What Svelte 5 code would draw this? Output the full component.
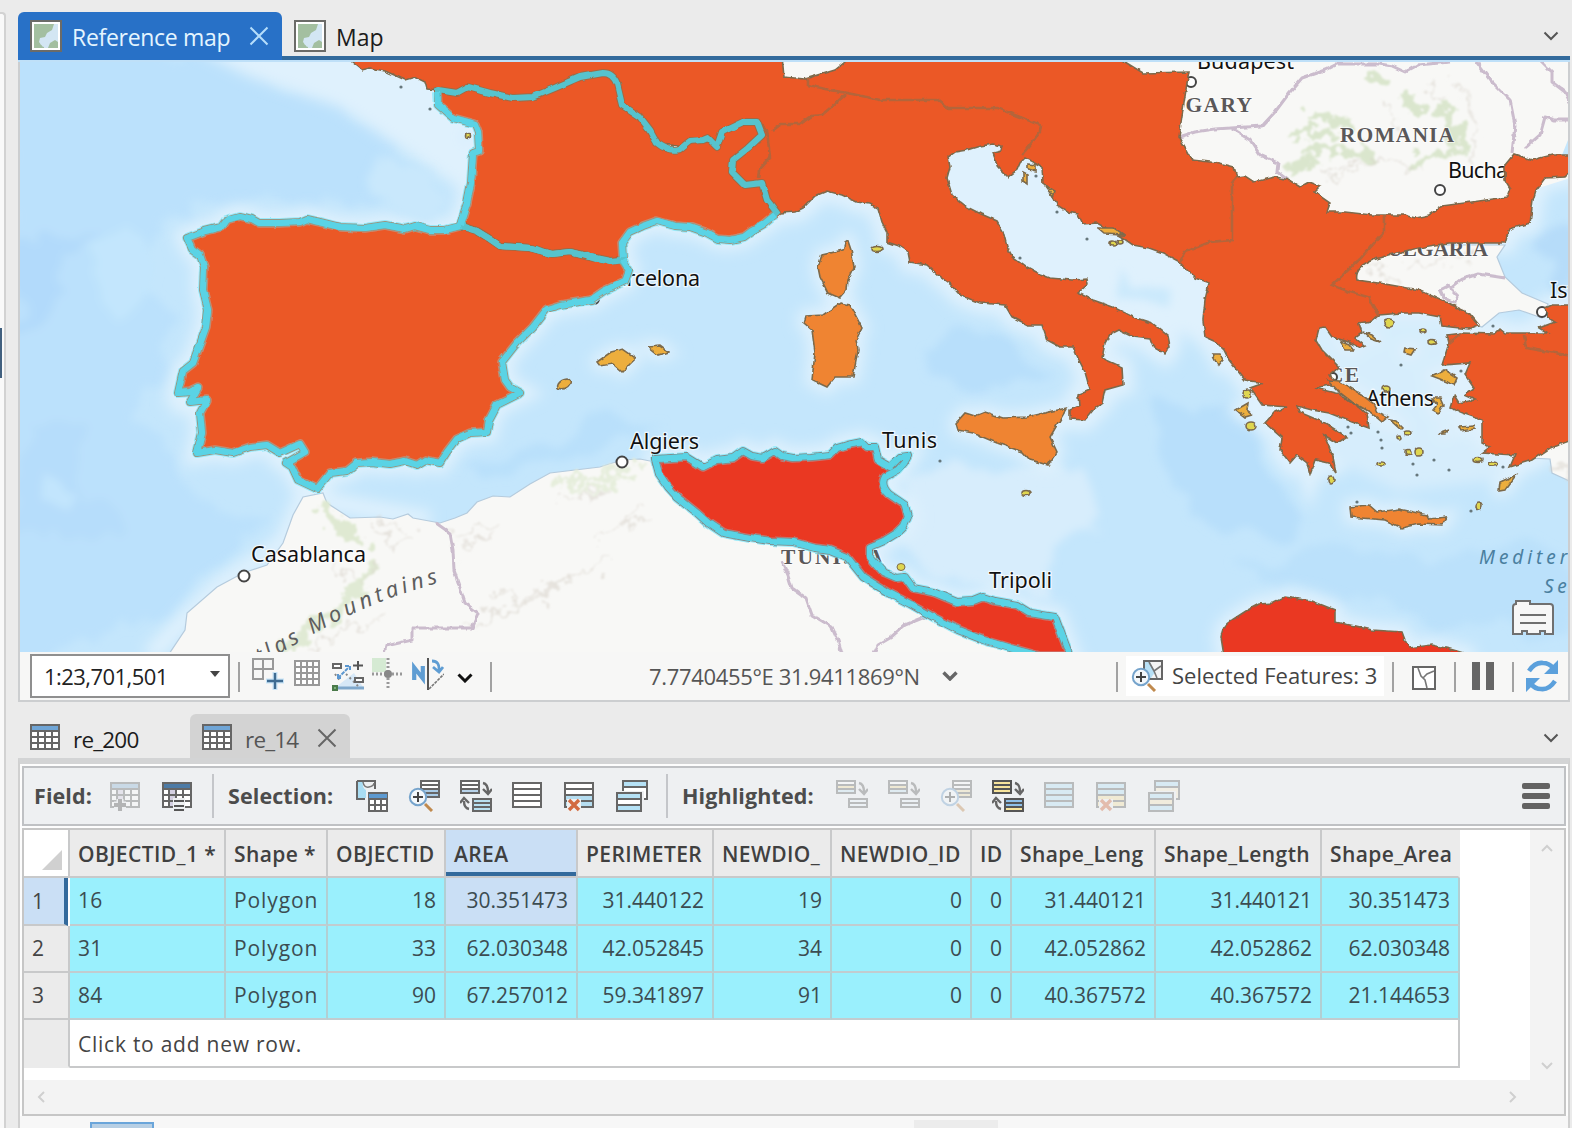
<script>
  const france =
    'M438 90L457 93L468 87L490 93L513 98L533 97L557 87L580 77L603 73Q613 73 617 84L622 105L640 117L650 130L657 143Q668 152 680 149L690 141L703 140L708 138L717 147L722 132L743 122L757 122L762 135L748 148L733 160L732 172L745 185L762 183L767 200L777 213L764 224L752 231L744 237L730 240L718 239L707 233L690 227L675 226L657 221L643 226L630 232L622 243L623 260L610 262L590 257L570 252L552 254L530 248L500 246L490 239L477 231L460 225L467 203L471 183L473 153L479 151L478 132L475 124L453 118L438 105Z';
  const iberia =
    'M187 238L205 231L221 227L226 220L240 216L252 219L259 223L280 223L300 222L307 219L320 222L340 227L365 228L385 225L405 229L415 226L430 230L445 230L460 226L477 231L490 239L500 246L530 248L552 254L570 252L590 257L610 261L622 260L629 270L625 281L604 291L591 300L560 305L547 309L533 327L517 343L502 362L505 380L510 387L521 393L497 405L489 420L487 432L470 433L457 439L447 452L440 463L425 460L417 465L405 461L390 464L372 462L357 463L347 471L330 473L317 489L298 480L292 467L286 463L305 452L300 444L280 453L267 445L250 447L233 453L215 450L197 453L202 433L200 413L207 400L190 402L198 388L190 392L178 393L183 371L193 363L200 344L206 327L208 310L203 290L204 267L200 255L192 249Z';
  const iberiaCoast =
    'M623 260L629 270L625 281L604 291L591 300L560 305L547 309L533 327L517 343L502 362L505 380L510 387L521 393L497 405L489 420L487 432L470 433L457 439L447 452L440 463L425 460L417 465L405 461L390 464L372 462L357 463L347 471L330 473L317 489L298 480L292 467L286 463L305 452L300 444L280 453L267 445L250 447L233 453L215 450L197 453L202 433L200 413L207 400L190 402L198 388L190 392L178 393L183 371L193 363L200 344L206 327L208 310L203 290L204 267L200 255L192 249L187 238L205 231L221 227L226 220L240 216L252 219L259 223L280 223L300 222L307 219L320 222L340 227L365 228L385 225L405 229L415 226L430 230L445 230L460 226';
  const franceCoast =
    'M437 92L438 105L453 118L475 124L478 132L479 151L473 153L471 183L467 203L460 225M775 215L764 224L752 231L744 237L730 240L718 239L707 233L690 227L675 226L657 221L643 226L630 232L622 243L623 258';
  const mainland =
    'M345 56L352 62L362 70L370 68L385 71L392 74L405 80L415 77L425 82L427 89L438 90L450 100L540 105L600 100L640 140L700 150L735 195L765 210L780 213L795 212L803 208L815 196L827 191L842 195L857 202L870 204L878 208L882 222L887 232L887 242L899 246L908 252L910 262L927 265L940 277L950 284L960 295L980 303L1005 305L1012 317L1028 325L1042 325L1047 340L1060 347L1073 347L1079 360L1085 372L1090 390L1078 395L1079 406L1070 410L1070 419L1085 420L1094 409L1102 403L1105 390L1123 385L1122 367L1102 358L1105 343L1110 334L1118 330L1133 337L1150 339L1153 347L1165 354L1170 346L1168 336L1152 323L1133 317L1113 307L1093 300L1078 293L1088 284L1087 279L1072 280L1050 278L1040 274L1027 267L1012 256L1007 247L1003 231L997 221L981 214L967 207L952 195L947 178L950 167L948 157L955 152L967 150L980 146L993 144L1002 146L1001 151L993 153L998 167L1008 177L1017 170L1020 163L1025 158L1042 167L1043 183L1050 190L1057 205L1068 212L1078 214L1083 224L1097 223L1113 232L1123 238L1133 245L1149 248L1163 253L1178 261L1188 271L1195 278L1209 283L1205 300L1203 320L1205 337L1216 342L1224 350L1229 360L1245 380L1264 383L1250 388L1262 405L1287 407L1275 412L1265 423L1282 438L1280 450L1290 463L1297 455L1307 463L1310 474L1315 460L1329 463L1336 473L1333 457L1324 435L1337 443L1347 437L1325 423L1299 412L1297 406L1312 410L1329 413L1352 422L1369 428L1367 414L1359 407L1347 400L1339 394L1315 388L1339 383L1329 376L1339 367L1322 350L1316 340L1319 328L1325 327L1332 337L1349 342L1360 348L1365 346L1355 338L1362 333L1359 323L1372 321L1379 315L1402 313L1419 313L1440 317L1442 326L1469 329L1479 325L1469 313L1452 305L1419 290L1385 284L1357 280Q1354 267 1372 260Q1410 248 1449 243L1505 243L1508 232L1512 228L1530 223L1533 200L1536 190L1545 178L1565 177L1572 170L1572 155L1552 155L1532 160L1514 154L1505 165L1505 180L1510 188L1507 197L1472 202L1442 206L1429 215L1415 218L1405 215L1372 215L1345 212L1327 212L1330 203L1314 192L1320 186L1309 182L1300 187L1289 180L1275 177L1254 182L1245 176L1237 177L1234 167L1219 163L1192 160L1185 147L1179 137L1184 103L1187 83L1189 72L1143 73L1125 62L1115 56L850 56L845 62L835 70L805 79L784 77L782 56Z';
  const turkey =
    'M1572 305L1552 305L1545 308L1547 317L1555 322L1539 328L1547 333L1505 333L1500 329L1495 334L1462 333L1447 335L1449 343L1442 365L1470 363L1465 375L1474 388L1464 395L1475 400L1459 403L1454 395L1450 408L1462 413L1482 420L1482 443L1490 447L1482 453L1515 455L1510 467L1532 460L1550 448L1572 440Z';
  const tunisia =
    'M655 459L687 457L695 462L703 467L717 460L733 458L743 451L752 456L763 458L775 451L782 456L793 458L812 457L830 455L837 448L847 445L862 442L867 447L875 447L878 460L890 467L900 457L908 456L904 463L898 470L885 477Q880 485 889 494L905 505L908 517L904 526L897 533L884 541L870 547L870 557L883 572L897 578L905 577L913 588L933 592L945 597L957 602L973 601L983 597L995 601L1017 605L1030 613L1055 617L1060 630L1070 656L1040 656L1010 648L983 640L958 630L933 617L910 604L887 592L863 577L855 567L847 557L830 550L815 548L793 542L770 541L750 538L723 533L708 523L697 513L677 497L668 487L659 474Z';
  const libya =
    'M1224 656L1221 637Q1222 626 1232 620L1246 611L1259 604L1273 603L1285 597L1312 601L1335 610L1335 622L1355 626L1372 630L1402 632L1405 640L1409 648L1432 645L1450 649L1474 656Z';
  const bigIslands = [
    'M848 241L851 250L854 267L848 280L847 290L840 298L828 293L820 277L818 267L822 255L843 250L845 243Z',
    'M840 303L850 305L858 320L862 328L856 340L858 350L853 377L835 377L827 387L812 380L815 353L812 330L804 323L806 316L823 315Z',
    'M956 423L965 413L975 416L985 412L1003 418L1027 417L1067 408L1050 437L1057 452L1048 465L1030 460L1023 452L997 443L973 433L958 430Z',
    'M1350 507L1369 505L1377 512L1399 509L1427 515L1429 519L1447 517L1442 525L1419 524L1402 528L1385 520L1351 517Z',
    'M1328 380L1339 381L1362 395L1374 404L1378 412L1388 417L1382 422L1370 412L1352 402L1339 392Z',
  ];
  const midIslands = [
    'M597 362L611 352L623 349L636 358L622 372L613 364L600 366Z',
    'M648 347L660 346L668 352L658 355Z',
    'M1516 475L1505 490L1499 491L1500 482Z',
    'M1432 376L1445 370L1457 378L1454 385L1440 379Z',
    'M1432 398L1440 398L1443 405L1438 413L1433 410L1437 405Z',
    'M1212 354L1220 354L1223 360L1218 366Z',
    'M1236 410L1248 403L1247 411L1252 415L1245 417Z',
    'M1097 228L1113 228L1123 235L1104 234Z',
    'M1028 164L1036 165L1036 171L1028 169ZM1023 172L1027 174L1027 184L1023 181ZM1045 186L1055 192L1053 197Z',
    'M1390 420L1396 421L1403 428L1401 430ZM1405 348L1415 349L1411 355L1404 353ZM1340 341L1350 345L1354 350L1346 350ZM1363 332L1372 335L1380 342L1371 339Z',
    'M1459 427L1474 426L1475 429L1461 431ZM1438 434L1449 430L1445 434Z',
  ];
  // [cx, cy, rx, ry]
  const specks = [
    [1389, 323, 5, 4], [1247, 394, 4, 4], [1251, 426, 5, 4], [1419, 452, 4, 4], [1331, 480, 3, 4],
    [1026, 493, 4, 2.5], [1479, 506, 3, 4], [1408, 452, 3, 2.5], [1381, 464, 4, 2],
    [1423, 331, 3, 2], [1432, 342, 4, 2.5], [1386, 389, 4, 3], [1478, 460, 5, 2.5], [1493, 464, 4, 2],
    [877, 249, 5, 2.5], [1408, 433, 3, 2], [468, 136, 2.5, 2.5], [1399, 438, 2, 2],
    [1113, 243, 3, 2], [1120, 242, 3, 2],
  ];
  const dots = [
    [940, 461], [1401, 365], [1493, 326], [1378, 432], [1381, 440], [1382, 448], [1413, 464], [1417, 475],
    [1434, 460], [1449, 470], [1471, 511], [1357, 502], [1503, 467], [1087, 239], [1036, 176], [1057, 212],
    [401, 87], [430, 109], [1020, 258], [1348, 427], [1351, 433], [1461, 371],
  ];
  const borders =
    'M1179 137L1195 132L1215 129L1262 126L1275 112L1290 92L1302 78L1325 70L1345 60M1232 129L1250 140L1260 155L1278 163L1277 172L1288 180M1475 60L1490 80L1510 100L1515 125L1512 153M1540 60L1552 72L1552 82L1565 92L1570 102M1570 120L1555 120L1545 117L1540 135L1525 148M1335 64L1380 64L1392 66L1405 72L1418 65L1450 62M1505 278L1492 276L1478 274L1460 280L1450 288L1458 296L1455 303L1444 298L1440 290L1450 285M436 523L450 533L453 550L454 570L460 588L465 603L478 613L472 628L412 628L412 640L386 646L384 654M782 562L788 575L792 588L806 598L812 615L832 627L838 640L842 654M925 617L905 625L890 638L878 645L874 654';
  const admin =
    'M808 78L808 85L825 89L847 93L862 96L880 100L938 100L948 108L997 108L1025 119L1041 125L1040 132L1022 155M780 124L800 124L812 116L822 115L845 95M780 125L772 131M757 120L767 130L770 158L759 170L758 178M1237 177L1232 183L1232 240L1210 242L1185 252L1180 262M1384 215L1384 232L1360 259L1332 285L1350 292L1368 297L1378 315M1524 335L1526 348L1572 356M1449 343L1462 333';

  const columns = [
    { name: 'OBJECTID_1 *', w: 156, left: true },
    { name: 'Shape *', w: 102, left: true },
    { name: 'OBJECTID', w: 118 },
    { name: 'AREA', w: 132, active: true },
    { name: 'PERIMETER', w: 136 },
    { name: 'NEWDIO_', w: 118 },
    { name: 'NEWDIO_ID', w: 140 },
    { name: 'ID', w: 40 },
    { name: 'Shape_Leng', w: 144 },
    { name: 'Shape_Length', w: 166 },
    { name: 'Shape_Area', w: 138 },
  ];
  const rows = [
    ['16', 'Polygon', '18', '30.351473', '31.440122', '19', '0', '0', '31.440121', '31.440121', '30.351473'],
    ['31', 'Polygon', '33', '62.030348', '42.052845', '34', '0', '0', '42.052862', '42.052862', '62.030348'],
    ['84', 'Polygon', '90', '67.257012', '59.341897', '91', '0', '0', '40.367572', '40.367572', '21.144653'],
  ];
  const selectionTools = ['byAttr', 'zoomSel', 'switch', 'clear', 'delete', 'copy'];
  const highlightTools = [
    ['move', true], ['move', true], ['zoomHi', true], ['switchHi', false], ['selectHi', true], ['deleteHi', true], ['copyHi', true],
  ];
</script>

{#snippet mapIcon()}
  <svg class="i32" viewBox="0 0 32 32">
    <rect x="1" y="1" width="30" height="30" fill="#fff" stroke="#6b6b68" stroke-width="2" />
    <rect x="4" y="4" width="24" height="24" fill="#d3e6f3" />
    <path d="M4 4H24L22 10L17 13L15 17L10 18L12 22L10 24L14 26V28H4Z" fill="#a3bfa0" />
    <path d="M10 18H13V21L16 22V26L13 27L9 22Z" fill="#d3e6f3" />
    <path d="M18 28L20 23L25 20L28 22V28Z" fill="#a3bfa0" />
  </svg>
{/snippet}

{#snippet chevron(cls)}
  <svg class="chev {cls}" viewBox="0 0 16 10"><path d="M1.5 1.5L8 8L14.5 1.5" /></svg>
{/snippet}

{#snippet closeIcon(cls)}
  <svg class="close {cls}" viewBox="0 0 20 20"><path d="M1.5 1.5L18.5 18.5M18.5 1.5L1.5 18.5" /></svg>
{/snippet}

{#snippet tableIcon()}
  <svg class="tbl" viewBox="0 0 30 26">
    <rect x="1" y="1" width="28" height="24" fill="#fff" stroke="#666" stroke-width="2" />
    <rect x="2" y="2" width="26" height="4" fill="#6fa5d6" />
    <path d="M0 7H30M0 13H30M0 19H30M8 7V26M15 7V26M22 7V26" stroke="#666" stroke-width="2" />
  </svg>
{/snippet}

{#snippet stack(x, y, w, a, b, c, s)}
  <rect {x} {y} width={w} height="12" fill={a} />
  <rect {x} y={y + 4} width={w} height="4" fill={b} />
  <rect {x} y={y + 8} width={w} height="4" fill={c} />
  <path d="M{x} {y + 4}H{x + w}M{x} {y + 8}H{x + w}" stroke={s} stroke-width="2" />
  <rect {x} {y} width={w} height="12" fill="none" stroke={s} stroke-width="2" />
{/snippet}

{#snippet magnifier()}
  <circle cx="10" cy="17" r="8.2" fill="#f4f8fb" stroke="#76a4cc" stroke-width="2" />
  <path d="M10 12V22M5 17H15" stroke="#444" stroke-width="2" />
  <path d="M17 24L24 31" stroke="#c08a4e" stroke-width="3" />
{/snippet}

{#snippet tool(name, dim)}
  <svg class="i32" class:dim viewBox="0 0 32 32">
    {#if name === 'addField' || name === 'calcField'}
      <rect x="2" y="3" width="28" height="24" fill="#fff" stroke="#666" stroke-width="2" />
      <rect x="3" y="4" width="26" height="5" fill={name === 'addField' ? '#8fb4d4' : '#4d7ba6'} />
      <rect x="8" y="10" width="7" height="16" fill="#d4d0e2" />
      <path d="M1 9H31M1 15H31M1 21H31M8 9V27M15 9V27M22 9V27" stroke="#666" stroke-width="2" />
      {#if name === 'addField'}
        <path d="M11 19V31M5 25H17" stroke="#edeff1" stroke-width="7" /><path d="M11 19V31M5 25H17" stroke="#555" stroke-width="4" />
      {:else}
        <rect x="12" y="18" width="12" height="14" fill="#edeff1" /><path d="M13 21H23M13 26H23M13 30H23" stroke="#555" stroke-width="2" />
      {/if}
    {:else if name === 'byAttr'}
      <path d="M1 1H19V9M1 1V19H9" fill="none" stroke="#666" stroke-width="2" />
      <path d="M2 2H7Q6 8 10 10V18H2Z" fill="#a9ddf3" /><path d="M7 2Q8 8 13 7T18 3" fill="none" stroke="#777" stroke-width="1.5" />
      <rect x="13" y="13" width="18" height="18" fill="#fff" stroke="#666" stroke-width="2" />
      <rect x="13" y="13" width="18" height="5" fill="#5d9ad1" />
      <path d="M12 19H32M12 25H32M19 19V31M25 19V31M12 13H32" stroke="#666" stroke-width="2" />
    {:else if name === 'zoomSel' || name === 'zoomHi'}
      <rect x="13" y="1" width="18" height="16" fill="#fff" stroke="#666" stroke-width="2" />
      <rect x="14" y="10" width="16" height="6" fill={name === 'zoomHi' ? '#f0dfae' : '#a9cbe6'} />
      <path d="M13 5H31M13 9H31M13 13H31" stroke="#666" stroke-width="2" />
      {@render magnifier()}
    {:else if name === 'switch'}
      {@render stack(1, 1, 18, '#fff', '#fff', '#b8d3ea', '#666')}
      {@render stack(13, 19, 18, '#b8e0f0', '#b8e0f0', '#b8e0f0', '#666')}
      <path class="ar" d="M23 3Q28 4 28 12M23 9L28 14L32 9M9 29Q4 28 4 21M0 23L4 18L9 23" />
    {:else if name === 'switchHi'}
      {@render stack(1, 1, 18, '#f7e49c', '#f7e49c', '#f7e49c', '#555')}
      {@render stack(13, 19, 18, '#8fc0e8', '#8fc0e8', '#f7e49c', '#555')}
      <path class="ar" d="M23 3Q28 4 28 12M23 9L28 14L32 9M9 29Q4 28 4 21M0 23L4 18L9 23" />
    {:else if name === 'move'}
      {@render stack(1, 1, 18, '#fff', '#f3dfa4', '#c9e4f1', '#666')}
      <rect x="13" y="19" width="18" height="8" fill="#eaf4fa" stroke="#666" stroke-width="2" /><path d="M13 23H31" stroke="#666" stroke-width="2" />
      <path class="ar" d="M23 3Q28 4 28 12M23 9L28 14L32 9" />
    {:else if name === 'clear' || name === 'selectHi'}
      <rect x="1" y="3" width="28" height="24" fill={name === 'clear' ? '#fff' : '#b5e1f5'} stroke="#666" stroke-width="2" />
      <path d="M1 9H29M1 15H29M1 21H29" stroke="#666" stroke-width="2" />
    {:else if name === 'delete' || name === 'deleteHi'}
      <rect x="1" y="3" width="28" height="24" fill={name === 'delete' ? '#fff' : '#b5e1f5'} stroke="#666" stroke-width="2" />
      <rect x="2" y="16" width="26" height="10" fill={name === 'delete' ? '#b5ddf0' : '#f5e2a4'} />
      <path d="M1 9H29M1 15H29M1 21H29" stroke="#666" stroke-width="2" />
      <rect x="3" y="19" width="14" height="13" fill="#f0f0f0" />
      <path d="M5 20L15 30M15 20L5 30" stroke="#d26a40" stroke-width="3.4" />
    {:else}
      <rect x="7" y="1" width="24" height="18" fill={name === 'copy' ? '#fff' : '#f8ebcf'} stroke="#666" stroke-width="2" />
      <rect x="8" y="2" width="22" height="4" fill="#b5e1f5" /><path d="M7 7H31" stroke="#666" stroke-width="2" />
      <rect x="0" y="11" width="28" height="21" fill="#eef0f2" />
      <rect x="1" y="13" width="24" height="18" fill="#b5e1f5" stroke="#666" stroke-width="2" />
      <rect x="2" y="19" width="22" height="6" fill={name === 'copy' ? '#fff' : '#f8e7bd'} />
      <path d="M1 19H25M1 25H25" stroke="#666" stroke-width="2" />
    {/if}
  </svg>
{/snippet}

<div class="app">
  <div class="edge"><div class="panel"><div class="mark"></div></div></div>
  <main>
    <header class="tabs">
      <div class="tab on">{@render mapIcon()}<span class="t1">Reference map</span>{@render closeIcon('light')}</div>
      <div class="tab plain">{@render mapIcon()}<span class="t2">Map</span></div>
      {@render chevron('end')}
    </header>

    <section class="view">
      <svg class="map" viewBox="20 62 1548 590">
        <defs>
          <filter id="soft" x="-20%" y="-20%" width="140%" height="140%"><feGaussianBlur stdDeviation="7" /></filter>
          <filter id="soft2" x="-20%" y="-20%" width="140%" height="140%">
            <feTurbulence type="fractalNoise" baseFrequency="0.02" numOctaves="3" seed="4" />
            <feDisplacementMap in="SourceGraphic" scale="50" xChannelSelector="R" yChannelSelector="G" />
            <feGaussianBlur stdDeviation="4" />
          </filter>
          <filter id="rough" x="-2%" y="-2%" width="104%" height="104%">
            <feTurbulence type="fractalNoise" baseFrequency="0.14" numOctaves="2" seed="7" />
            <feDisplacementMap in="SourceGraphic" scale="4" xChannelSelector="R" yChannelSelector="G" />
            <feGaussianBlur stdDeviation="0.35" />
          </filter>
          <filter id="glow" x="-2%" y="-2%" width="104%" height="104%">
            <feTurbulence type="fractalNoise" baseFrequency="0.1" numOctaves="1" seed="3" />
            <feDisplacementMap in="SourceGraphic" scale="4" xChannelSelector="R" yChannelSelector="G" />
            <feGaussianBlur stdDeviation="0.6" />
          </filter>
          <filter id="relief" x="-5%" y="-5%" width="110%" height="110%">
            <feTurbulence type="fractalNoise" baseFrequency="0.07" numOctaves="4" seed="11" />
            <feDisplacementMap in="SourceGraphic" scale="34" xChannelSelector="R" yChannelSelector="G" />
            <feGaussianBlur stdDeviation="1" />
          </filter>
          <path id="fr" d={france} />
          <path id="ib" d={iberia} />
          <path id="eu" d={mainland} />
          <path id="tk" d={turkey} />
          <path id="tn" d={tunisia} />
          <path id="ly" d={libya} />
          <path id="atlas" d="M243 672C300 648 350 598 480 574" />
        </defs>

        <rect x="0" y="40" width="1600" height="640" fill="#c4e6fc" />
        <g filter="url(#soft2)">
          <path d="M0 40H150L260 75L340 100L395 150L440 190L380 205L190 200L140 260L170 320L140 420L200 500L260 520L230 560L150 620L0 680Z" fill="#bbe1fc" />
          <path d="M0 240H60L85 228L120 225L60 250L70 300L20 340Z" fill="#b2dafb" />
          <path d="M20 430L75 440L100 500L120 525L80 545L20 540Z" fill="#b6ddfb" />
          <path d="M85 240L140 230L160 290L110 320Z" fill="#c3e6fd" />
          <path d="M40 460L90 485L80 510L40 500Z" fill="#c2e5fd" />
          <path d="M950 325L990 325L1050 370L1030 385L930 375L920 360Z" fill="#b8dffb" />
          <path d="M440 480L560 440L600 415L660 420L600 450L500 475Z" fill="#b9e0fb" />
          <path d="M1150 400L1220 410L1290 490L1300 530L1230 540L1170 480Z" fill="#b8dffb" />
          <path d="M1240 560L1350 545L1430 560L1540 540L1590 590L1568 640L1430 620L1300 590Z" fill="#bbe1fb" />
          <path d="M910 470L1030 460L1080 480L1100 520L1050 560L1050 600L960 590L900 540Z" fill="#d7edfc" />
          <path d="M1545 230H1580V290H1555Z" fill="#b6dcf9" />
        </g>
        <g filter="url(#soft)" fill="#dff1fd" stroke="#dff1fd" stroke-width="22">
          <use href="#ib" /><use href="#fr" /><use href="#eu" /><use href="#tk" /><use href="#tn" /><use href="#ly" stroke-width="16" />
          <path d="M950 150L1030 160L1180 270L1200 330L1160 310L1050 270L960 190Z" />
          <path d="M1320 330H1440V430L1490 470L1400 480L1340 450Z" fill="#d6edfc" stroke="#d6edfc" />
          <path d="M200 50H440L480 210L465 190L400 145L340 105L250 75Z" stroke-width="4" />
          {#each bigIslands as d}<path {d} stroke-width="14" />{/each}
          {#each midIslands as d}<path {d} stroke-width="12" />{/each}
          <path d="M150 656L185 620L217 587L283 543L303 497L430 520" fill="none" stroke-width="18" />
        </g>
        <g filter="url(#soft2)">
          <path d="M385 155L430 168L450 205L400 212L370 190Z" fill="#c9e8fc" />
          <path d="M1125 270L1160 290L1165 305L1130 300Z" fill="#cbe9fc" />
        </g>

        <g fill="#f8f8f6" stroke="#b5cbdd" stroke-width="1.2">
          <path d="M165 660L185 630L187 613L217 587L243 573L267 565L283 543L293 515L303 497L323 493L327 503L350 518L380 517L393 519L408 514L413 518L440 523L455 518L467 513L477 502L493 496L510 497L530 484L550 473L575 470L600 467L622 460L640 459L670 465L850 530L880 565L960 610L1062 645L1062 660Z" />
          <path d="M1110 50H1580V175L1500 200L1400 225L1170 200ZM780 50H850L830 90H780Z" stroke="none" />
          <path d="M1350 245H1505L1497 257L1505 277L1522 293L1548 304L1542 318L1519 310L1499 313L1482 327L1400 300L1350 290Z" />
          <path d="M1580 430L1530 458L1550 459L1552 473L1580 486Z" />
        </g>
        <path d="M1572 130L1562 155H1572Z" fill="#c4e6fc" />

        <g filter="url(#relief)" fill="none" stroke-linecap="round">
          <path d="M322 510L340 525L362 540" stroke="#dfe9d2" stroke-width="13" />
          <path d="M350 595L372 570M285 650L320 622L345 605" stroke="#e0ead4" stroke-width="12" />
          <path d="M560 485L600 478L640 470M575 492L620 482" stroke="#e6eedc" stroke-width="6" />
          <path d="M1310 120L1330 115L1345 125M1300 135L1330 130M1310 150L1340 150L1375 158M1405 95L1420 118M1440 105L1455 130L1460 150L1430 158L1410 165M1290 172L1310 160M1370 75L1390 82" stroke="#dae6cd" stroke-width="9" />
          <path d="M375 530L390 545L410 535M385 522L400 530M490 590L520 600L580 575M470 625L520 605L610 560M500 615L540 600M640 505L620 530M350 630L385 612M330 560L350 580M365 580L378 566M310 650L350 625M455 540L500 520M460 550L490 535M560 500L610 490M600 540L650 515M1320 170L1370 160L1420 168M1330 176L1365 168M1465 90L1480 130L1470 165M1455 80L1472 120M1380 100L1400 130M1430 85L1450 100M1365 270L1400 282M1410 262L1470 258M1555 465L1570 475" stroke="#d9d3cc" stroke-width="2.5" opacity=".6" />
        </g>

        <path d={borders} fill="none" stroke="#cbbccd" stroke-width="3" stroke-linejoin="round" filter="url(#rough)" />

        <g class="nations">
          <text x="1134" y="112" textLength="118">HUNGARY</text>
          <text x="1340" y="142" textLength="114">ROMANIA</text>
          <text x="1373" y="256" textLength="115">BULGARIA</text>
          <text x="781" y="564" textLength="102">TUNISIA</text>
          <text x="1262" y="382" textLength="97">GREECE</text>
        </g>
        <text class="atlas"><textPath href="#atlas" startOffset="2">Atlas Mountains</textPath></text>
        <g class="sea">
          <text x="1479" y="564" textLength="172">Mediterranean</text>
          <text x="1544" y="593" textLength="37">Sea</text>
        </g>
        <g class="towns">
          <circle cx="1191" cy="82" r="5" /><circle cx="1440" cy="190" r="5" /><circle cx="1542" cy="312" r="5" />
          <circle cx="622" cy="462" r="5.5" /><circle cx="244" cy="576" r="5.5" /><circle cx="594" cy="299" r="5" />
          <circle cx="982" cy="600" r="5" /><circle cx="1333" cy="377" r="4" />
        </g>
        <g class="cities">
          <text x="1197" y="69" textLength="97">Budapest</text>
          <text x="1448" y="178" textLength="96">Bucharest</text>
          <text x="1550" y="298">Istanbul</text>
          <text x="601" y="286" textLength="99">Barcelona</text>
          <text x="630" y="449" textLength="69">Algiers</text>
          <text x="882" y="448" textLength="55">Tunis</text>
          <text x="251" y="562" textLength="115">Casablanca</text>
          <text x="989" y="588" textLength="63">Tripoli</text>
          <text x="1366" y="406" textLength="68">Athens</text>
        </g>

        <g filter="url(#rough)" stroke="#7c6a4c" stroke-width="1.6">
          <g fill="#eb5828"><use href="#eu" /><use href="#tk" /></g>
          <path d={admin} fill="none" stroke="#b3653a" stroke-width="2.6" />
          <use href="#ly" fill="#ea3723" />
          <g fill="#ef8432">{#each bigIslands as d}<path {d} />{/each}</g>
          <g fill="#edae3c">
            {#each midIslands as d}<path {d} />{/each}
            <ellipse cx="564" cy="384" rx="7" ry="4" transform="rotate(-30 564 384)" />
          </g>
          <g fill="#dfd650">{#each specks as [cx, cy, rx, ry]}<ellipse {cx} {cy} {rx} {ry} />{/each}</g>
        </g>
        <g fill="#66777c">{#each dots as [cx, cy]}<circle {cx} {cy} r="1.6" />{/each}</g>

        <g filter="url(#glow)" stroke-linejoin="round">
          <g fill="none" stroke="#8eeafa" stroke-width="10" opacity=".8">
            <path d={iberiaCoast} /><path d={franceCoast} /><use href="#tn" />
          </g>
          <g fill="#eb5828" stroke="#a06a44" stroke-width="8"><use href="#fr" /><use href="#ib" /></g>
          <use href="#tn" fill="#ea3723" stroke="#7d5a50" stroke-width="8" />
          <g fill="none" stroke="#8eeafa" stroke-width="9.5" opacity=".35"><path d={iberiaCoast} /><path d={franceCoast} /><use href="#tn" /></g>
          <g fill="none" stroke="#57c3cd" stroke-width="6"><use href="#fr" /><use href="#ib" /><use href="#tn" /></g>
          <g fill="none" stroke="#5ad3e5" stroke-width="6"><path d={iberiaCoast} /><path d={franceCoast} /><use href="#tn" /></g>
        </g>
        <ellipse cx="901" cy="567" rx="4" ry="3.5" fill="#dfd650" stroke="#7c6a4c" />

        <g fill="#f7f7f7" stroke="#707070" stroke-width="2">
          <path d="M1513 633V607Q1513 604 1516 604V601H1530V604H1550Q1553 604 1553 607V634H1545V631H1540V634H1527V631H1522V634H1513Z" />
          <path d="M1520 615H1546M1520 623H1546" />
        </g>
      </svg>

      <footer class="status">
        <div class="scale"><span>1:23,701,501</span><i></i></div>
        <b class="sep s1"></b>
        <svg class="i32 a" viewBox="0 0 32 32">
          <g fill="none" stroke="#999" stroke-width="2"><path d="M1 1H21V11H1ZM1 11V21H11V1" /></g>
          <path d="M23 14V32M14 23H32" stroke="#c7e3f6" stroke-width="5" /><path d="M23 15V31M15 23H31" stroke="#3f6c92" stroke-width="2.4" />
        </svg>
        <svg class="g26" viewBox="0 0 26 26"><path d="M1 1H25V25H1ZM1 7H25M1 13H25M1 19H25M7 1V25M13 1V25M19 1V25" fill="#fff" stroke="#999" stroke-width="2" /></svg>
        <svg class="i32 c" viewBox="0 0 32 32">
          <path d="M4 27L22 13L31 27Z" fill="#d6e8f7" /><path d="M2 28H32" stroke="#7fa8cc" stroke-width="3" />
          <path d="M14 14L26 26M3 14L9 22" stroke="#888" stroke-width="2" stroke-dasharray="2 3" />
          <path d="M6 18L17 7M17 6H12M18 6V11M5 18H10M6 18V13" stroke="#5b97d0" stroke-width="2" stroke-dasharray="4 1" fill="none" />
          <path d="M26 1V10M21 5.5H31" stroke="#555" stroke-width="2" />
          <g fill="#fff" stroke="#666" stroke-width="2"><rect x="1" y="4" width="8" height="4" /><rect x="23" y="18" width="8" height="4" /><rect x="1" y="26" width="4" height="4" fill="#7bb27a" stroke="#4a7a4a" /></g>
        </svg>
        <svg class="i32 d" viewBox="0 0 32 32">
          <rect width="14" height="14" fill="#d5ead3" /><path d="M16 0V32M0 16H32" stroke="#999" stroke-width="3" stroke-dasharray="2 2" /><circle cx="16" cy="16" r="4" fill="#888" />
        </svg>
        <svg class="i32 e" viewBox="0 0 32 32">
          <path d="M2.2 22V9.5L10.8 20.5V8" fill="none" stroke="#5f9dd3" stroke-width="4.2" />
          <path d="M16 0V32" stroke="#555" stroke-width="2" /><path d="M17 31L32 16" stroke="#777" stroke-width="1.6" stroke-dasharray="3 1" />
          <path d="M20 3Q28 3 27 13M21 9L27 14L31 9" fill="none" stroke="#5f9dd3" stroke-width="2.8" />
        </svg>
        {@render chevron('dark')}
        <b class="sep s2"></b>
        <span class="coords">7.7740455°E 31.9411869°N</span>
        {@render chevron('mid')}
        <b class="sep s3"></b>
        <div class="sel">
          <svg class="i32" viewBox="0 0 32 32">
            <rect x="13" y="1" width="18" height="18" fill="#f4f4f4" stroke="#666" stroke-width="2" />
            <path d="M14 2H19L24 12L20 18H14Z" fill="#b8e0f5" /><path d="M18 2L23 11L30 6M23 11L26 18" fill="none" stroke="#777" stroke-width="1.6" />
            {@render magnifier()}
          </svg>
          <span>Selected Features: 3</span>
        </div>
        <b class="sep s4"></b>
        <svg class="m24" viewBox="0 0 24 24"><rect x="1" y="1" width="22" height="22" fill="#fff" stroke="#666" stroke-width="2" /><path d="M6 2L9 10L13 14L15 22M11 12L15 8L22 5" fill="none" stroke="#777" stroke-width="1.6" /></svg>
        <b class="sep s5"></b>
        <div class="pause"></div>
        <b class="sep s6"></b>
        <svg class="i32 r" viewBox="0 0 32 32">
          <path d="M3 11Q9 2 17 3Q23 3 27 8M29 21Q23 30 15 29Q9 29 5 24" fill="none" stroke="#5ba0dc" stroke-width="4.6" />
          <path d="M32 0V14H18ZM0 32V18H14Z" fill="#5ba0dc" />
        </svg>
      </footer>
    </section>

    <nav class="ttabs">
      <div class="tt">{@render tableIcon()}<span>re_200</span></div>
      <div class="tt on">{@render tableIcon()}<span>re_14</span>{@render closeIcon('gray')}</div>
      {@render chevron('end')}
    </nav>

    <section class="pane">
      <div class="toolbar">
        <strong class="w1">Field:</strong>
        <div class="group f">{@render tool('addField', true)}{@render tool('calcField', false)}</div>
        <b class="bar b1"></b>
        <strong class="w2">Selection:</strong>
        <div class="group">{#each selectionTools as t}{@render tool(t, false)}{/each}</div>
        <b class="bar b2"></b>
        <strong class="w3">Highlighted:</strong>
        <div class="group">{#each highlightTools as [t, d]}{@render tool(t, d)}{/each}</div>
        <div class="burger"><i></i><i></i><i></i></div>
      </div>

      <div class="grid">
        <div class="body">
          <div class="tr head">
            <div class="rh corner"><svg viewBox="0 0 20 20"><path d="M20 0V20H0Z" fill="#d0d0d0" /></svg></div>
            {#each columns as c}<div class="th" class:active={c.active} style:width="{c.w}px">{c.name}</div>{/each}
          </div>
          {#each rows as r, i}
            <div class="tr row r{i + 1}">
              <div class="rh" class:cur={i === 0}>{i + 1}</div>
              {#each r as v, j}
                <div class="td" class:left={columns[j].left} class:word={j === 1} class:cell={i === 0 && j === 3} style:width="{columns[j].w}px">{v}</div>
              {/each}
            </div>
          {/each}
          <div class="tr add"><div class="rh"></div><div class="new">Click to add new row.</div></div>
          <div class="hs">
            <svg viewBox="0 0 8 12"><path d="M7 1L2 6L7 11" /></svg>
            <svg viewBox="0 0 8 12"><path d="M1 1L6 6L1 11" /></svg>
          </div>
        </div>
        <div class="vs">
          <svg viewBox="0 0 12 8"><path d="M1 7L6 2L11 7" /></svg>
          <svg viewBox="0 0 12 8"><path d="M1 1L6 6L11 1" /></svg>
        </div>
      </div>
      <div class="under"><i class="u1"></i><i class="u2"></i></div>
    </section>
  </main>
</div>

<style>
  :global(body) { margin: 0; background: #ebebeb; overflow: hidden; }
  .app { width: 1572px; height: 1128px; display: flex; overflow: hidden; background: #ebebeb; font-family: 'Open Sans', 'Noto Sans', sans-serif; font-size: 21px; color: #444; line-height: 1; }
  svg { display: block; flex: none; }
  .app :global(*) { box-sizing: border-box; }
  .edge { width: 18px; padding-top: 12px; }
  .panel { width: 6px; height: 1116px; background: #f9f9f9; border-right: 2px solid #d2d2d2; border-top: 2px solid #d2d2d2; border-top-right-radius: 4px; padding-top: 314px; }
  .mark { width: 2px; height: 50px; background: #41607f; }
  main { width: 1552px; display: flex; flex-direction: column; }
  .i32 { width: 32px; height: 32px; }
  .dim { opacity: .38; }
  .ar { fill: none; stroke: #666; stroke-width: 2.4; }

  .tabs { height: 62px; display: flex; align-items: flex-end; background: linear-gradient(#ebebeb 56px, #336a9c 56px, #336a9c 60px, #bfe0f8 60px); }
  .tab { display: flex; align-items: center; height: 48px; margin-bottom: 2px; }
  .tab.on { width: 264px; background: #2871c7; border-radius: 6px 6px 0 0; color: #e4f5ff; padding-left: 12px; }
  .tab.plain { padding-left: 12px; color: #1c1c1c; flex: 1; }
  .t1 { font-size: 23px; letter-spacing: -.3px; width: 158px; margin-left: 10px; white-space: nowrap; }
  .t2 { font-size: 23px; margin-left: 10px; }
  .t1, .t2 { padding-top: 2px; }
  .close { width: 20px; height: 20px; fill: none; stroke-width: 2; }
  .close.light { stroke: #b5ddfb; margin-left: 19px; }
  .close.gray { stroke: #666; margin: 3px 0 0 19px; }
  .chev { width: 16px; height: 10px; fill: none; stroke: #555; stroke-width: 2; }
  .tabs .end { margin: 0 11px 21px 0; }

  .view { border: 2px solid #ccced0; border-top: 0; height: 640px; }
  .map { width: 1548px; height: 590px; font-family: 'Noto Sans', sans-serif; }
  .cities text { font-size: 21.5px; fill: #111; stroke: rgba(255, 255, 255, .7); stroke-width: 2.5px; paint-order: stroke; }
  .towns circle { fill: #fff; stroke: #444; stroke-width: 2px; }
  .nations text { font-family: 'Liberation Serif', serif; font-weight: 700; font-size: 21.5px; fill: #5a5758; stroke: rgba(255, 255, 255, .6); stroke-width: 2px; paint-order: stroke; }
  .sea text { font-size: 19px; font-style: italic; fill: #4a7f9f; }
  .atlas { font-size: 22px; letter-spacing: 4px; fill: #5e5e5e; font-style: italic; }

  .status { height: 48px; display: flex; align-items: center; background: #f7f7f6; padding-left: 10px; font-size: 22.5px; }
  .scale { width: 200px; height: 44px; border: 2px solid #8f8f8f; background: #fff; display: flex; align-items: center; justify-content: space-between; padding: 0 8px 0 12px; color: #222; }
  .scale span { font-size: 22px; letter-spacing: -.55px; }
  .scale i { border: 5px solid transparent; border-top: 6px solid #444; border-bottom: 0; margin-top: -4px; }
  .sep { width: 2px; height: 30px; background: #a2a2a2; margin-top: 2px; }
  .s1 { margin-left: 8px; }
  .a { margin: -4px 10px 0 12px; }
  .g26 { width: 26px; height: 26px; margin-top: -6px; }
  .c { margin-left: 12px; }
  .d { margin: -4px 0 0 8px; }
  .e { margin: -4px 13px 0 8px; }
  .dark { stroke: #111; stroke-width: 3; margin-top: 4px; }
  .s2 { margin-left: 17px; }
  .coords { margin-left: 157px; width: 272px; font-size: 22px; letter-spacing: -.33px; white-space: nowrap; color: #555; }
  .mid { stroke-width: 3.4; stroke: #666; margin-left: 20px; width: 18px; }
  .s3 { margin-left: 157px; }
  .sel { margin-left: 8px; width: 258px; height: 40px; background: #fff; display: flex; align-items: center; padding-left: 5px; white-space: nowrap; }
  .sel span { margin: -2px 0 0 9px; font-size: 22px; }
  .s4 { margin-left: 8px; }
  .m24 { width: 24px; height: 24px; margin: 4px 0 0 18px; }
  .s5 { margin-left: 18px; }
  .pause { width: 22px; height: 28px; border: solid #666; border-width: 0 8px; margin-left: 16px; }
  .s6 { margin-left: 18px; }
  .r { margin-left: 12px; }

  .ttabs { height: 56px; display: flex; align-items: flex-end; }
  .tt { height: 44px; display: flex; align-items: center; padding: 0 0 0 12px; width: 172px; font-size: 22.5px; letter-spacing: -.8px; color: #1c1c1c; }
  .tt.on { width: 160px; background: #d3d3d3; border-radius: 6px 6px 0 0; color: #555; }
  .tt span { margin: 8px 0 0 13px; }
  .tbl { width: 30px; height: 26px; margin-top: 2px; }
  .ttabs .end { margin: 0 11px 15px auto; }

  .pane { flex: 1; border: 2px solid #d0d0d0; border-bottom: 0; border-top: 6px solid #d3d4d5; background: #fdfdfd; padding: 2px 2px 0; display: flex; flex-direction: column; }
  .toolbar { height: 60px; border: 2px solid #bfc1c4; background: #eef0f2; display: flex; align-items: center; color: #4c4c4c; font-size: 21.5px; padding-left: 10px; }
  strong { font-weight: 700; white-space: nowrap; letter-spacing: .1px; }
  .w1 { width: 75px; } .w2 { width: 128px; } .w3 { width: 154px; }
  .group { display: flex; gap: 20px; }
  .bar { width: 2px; height: 44px; background: #c4c6ca; }
  .b1 { margin: 0 14px 0 19px; } .b2 { margin: 0 14px 0 18px; }
  .burger { margin: 0 14px 0 auto; display: grid; gap: 4px; }
  .burger i { width: 28px; height: 6px; border-radius: 2px; background: #636363; }

  .grid { margin-top: 2px; height: 288px; border: 2px solid #c6c6c6; display: flex; background: #fff; }
  .body { width: 1506px; display: flex; flex-direction: column; }
  .tr { display: flex; width: 1436px; }
  .rh, .th, .td { border-right: 2px solid #c8c9ca; border-bottom: 2px solid #c8c9ca; display: flex; align-items: center; white-space: nowrap; }
  .rh { width: 46px; background: #ebebeb; padding-left: 8px; }
  .head { height: 48px; }
  .head .th { background: #ebebeb; font-weight: 600; padding: 2px 0 0 8px; color: #404040; letter-spacing: .4px; }
  .head .th:last-child { border-right-color: #ebebeb; }
  .corner { background: #fff; align-items: flex-end; padding: 0 0 6px 18px; }
  .corner svg { width: 20px; height: 20px; }
  .th.active { background: #cadff5; box-shadow: inset 0 -4px #336a9c; }
  .r1 { height: 48px; } .r2 { height: 47px; } .r3 { height: 47px; }
  .r1, .r3 { line-height: 23px; }
  .td { background: #9af0fd; justify-content: flex-end; padding: 0 8px 1px 0; color: #3c4c51; border-color: #b1cfd3; border-bottom-color: #c2cccf; }
  .td.left { justify-content: flex-start; padding: 0 0 1px 8px; letter-spacing: .3px; }
  .td.word { letter-spacing: .9px; }
  .td.cell { background: #cadff5; }
  .rh.cur { background: #cadff5; border-right: 4px solid #336a9c; width: 44px; margin-right: 2px; }
  .add { height: 48px; }
  .add .rh { border-bottom-color: #ebebeb; }
  .new { flex: 1; display: flex; align-items: center; padding: 2px 0 0 8px; border: 2px solid #c8c9ca; border-width: 0 2px 2px 0; letter-spacing: .75px; }
  .hs { height: 34px; margin-top: auto; background: #f3f3f3; display: flex; align-items: center; justify-content: space-between; padding: 0 13px; }
  .hs svg { width: 8px; height: 12px; }
  .vs { width: 34px; background: #f3f3f3; display: flex; flex-direction: column; justify-content: space-between; align-items: center; padding: 14px 0 44px; }
  .vs svg { width: 12px; height: 8px; }
  .hs path, .vs path { fill: none; stroke: #cfcfcf; stroke-width: 2; }
  .under { flex: 1; background: #f7f7f7; margin: 0 -2px; display: flex; align-items: flex-end; }
  .u1 { width: 64px; height: 6px; margin-left: 70px; background: #b7cfe4; border: 2px solid #6aa5da; border-bottom: 0; }
  .u2 { width: 84px; height: 8px; margin-left: 760px; background: #ececec; }
</style>
